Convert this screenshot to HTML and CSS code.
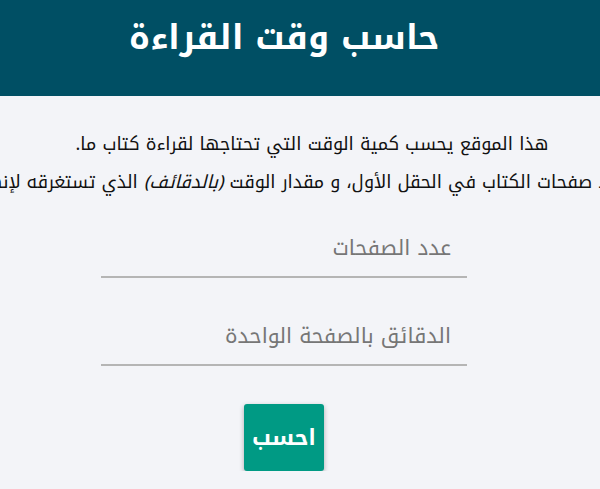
FILE: index.html
```html
<!DOCTYPE html>
<html lang="ar" dir="rtl">
<head>
<meta charset="utf-8">
<title>حاسب وقت القراءة</title>
<link rel="stylesheet" href="styles.css">
</head>
<body>
<header class="top">
  <h1 class="title">حاسب وقت القراءة</h1>
</header>
<main class="main">
  <p class="intro first">هذا الموقع يحسب كمية الوقت التي تحتاجها لقراءة كتاب ما.</p>
  <p class="intro wide">قم بإدخال عدد صفحات الكتاب في الحقل الأول، و مقدار الوقت <em>(بالدقائف)</em> الذي تستغرقه لإنهاء الصفحة الواحدة.</p>
  <form class="form">
    <input class="field" type="number" placeholder="عدد الصفحات">
    <input class="field" type="number" placeholder="الدقائق بالصفحة الواحدة">
    <button class="btn" type="button">احسب</button>
  </form>
</main>
</body>
</html>
```
FILE: styles.css
```css
html, body {
  margin: 0;
  padding: 0;
  background: #f3f4f8;
  overflow: hidden;
}
body {
  font-family: "Noto Kufi Arabic", "Noto Sans Arabic", "DejaVu Sans", sans-serif;
  color: #111;
}
.top {
  background: #004f64;
  height: 96px;
  display: flex;
  justify-content: center;
  padding-right: 32px;
  box-sizing: border-box;
}
.title {
  margin: 18px 0 0;
  color: #fff;
  font-size: 34px;
  font-weight: 700;
  line-height: 1.2;
}
.main {
  display: flex;
  flex-direction: column;
  align-items: center;
  padding-right: 32px;
}
.intro {
  margin: 36px 0 0;
  font-size: 18px;
  line-height: 1.4;
  white-space: nowrap;
}
.first {
  margin-left: 56px;
}
.wide {
  margin-top: 13px;
  margin-right: 16px;
}
.form {
  display: flex;
  flex-direction: column;
  align-items: center;
  margin-top: 27px;
}
.field {
  width: 366px;
  box-sizing: border-box;
  border: 0;
  border-bottom: 2px solid #b5b5b5;
  background: transparent;
  font-family: inherit;
  font-size: 21px;
  padding: 6px 16px 8px;
  margin-bottom: 32px;
  outline: none;
  direction: rtl;
}
.field::placeholder {
  color: #767676;
}
.field + .field {
  margin-bottom: 38px;
}
.btn {
  width: 80px;
  height: 67px;
  border: 0;
  border-radius: 3px;
  background: #009a84;
  color: #fff;
  font-family: inherit;
  font-size: 22px;
  font-weight: 700;
  box-shadow: 0 2px 5px rgba(0,0,0,0.3);
}
```
